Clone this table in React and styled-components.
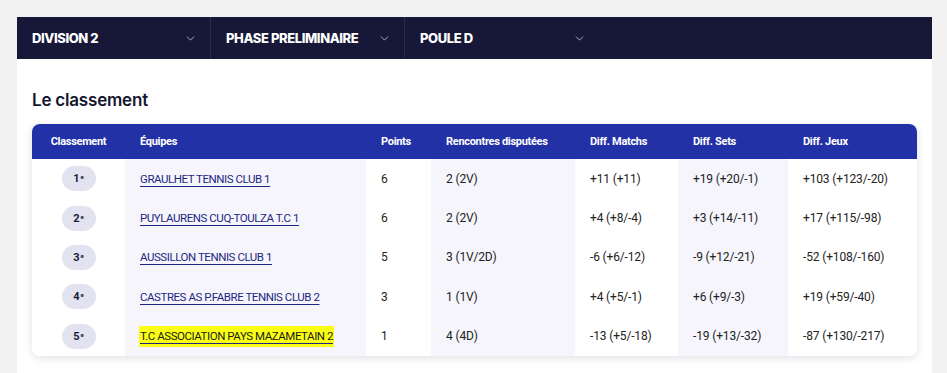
import React from 'react';
import styled, { createGlobalStyle } from 'styled-components';
import { ChevronDown } from 'lucide-react';

const GlobalStyle = createGlobalStyle`
  body {
    margin: 0;
    background: #f2f2f3;
    font-family: Roboto, "Liberation Sans", sans-serif;
  }
`;

const Page = styled.div`
  padding: 17px 15px 0 17px;
`;

const Container = styled.div`
  width: 915px;
`;

const FilterBar = styled.div`
  display: flex;
  height: 42px;
  background: #171737;
`;

const Filter = styled.div`
  width: 194px;
  display: flex;
  align-items: center;
  justify-content: space-between;
  padding: 0 13px 0 15px;
  box-sizing: border-box;
  border-right: 1px solid #2b2b4c;
  color: #fff;
  font-family: Inter, "Noto Sans", sans-serif;
  font-weight: 800;
  font-size: 13px;
  letter-spacing: -0.4px;
  text-transform: uppercase;

  svg {
    color: #c9c9d8;
  }

  &:last-child {
    border-right: none;
  }
`;

const Panel = styled.div`
  background: #fff;
  padding: 29px 15px 17px;
`;

const Title = styled.h2`
  margin: 0 0 12px;
  font-family: Inter, "Noto Sans", sans-serif;
  font-size: 17px;
  line-height: 24px;
  font-weight: 600;
  color: #16162e;
  letter-spacing: -0.2px;
`;

const TableWrap = styled.div`
  border-radius: 8px;
  overflow: hidden;
  box-shadow: 0 2px 8px rgba(20, 20, 60, 0.13);
`;

const Table = styled.table`
  width: 885px;
  border-collapse: collapse;
  table-layout: fixed;
`;

const Th = styled.th`
  height: 35px;
  background: #2231a6;
  color: #fff;
  font-size: 11px;
  font-weight: 700;
  letter-spacing: -0.3px;
  text-align: ${(p) => (p.$center ? 'center' : 'left')};
  padding: 0 0 0 ${(p) => (p.$center ? '0' : '15px')};
`;

const Td = styled.td`
  height: 39.4px;
  padding: 0 0 0 ${(p) => (p.$center ? '0' : '15px')};
  text-align: ${(p) => (p.$center ? 'center' : 'left')};
  background: ${(p) => (p.$shade ? '#f5f5fb' : '#fff')};
  font-size: 12px;
  letter-spacing: -0.15px;
  color: #222;
  white-space: nowrap;
`;

const Rank = styled.span`
  display: inline-flex;
  align-items: center;
  justify-content: center;
  width: 34px;
  height: 25px;
  border-radius: 13px;
  background: #e2e2f1;
  font-size: 11px;
  font-weight: 700;
  color: #1b1b33;

  sup {
    font-size: 6px;
    margin-left: 1px;
    position: relative;
    top: -2px;
  }
`;

const TeamLink = styled.a`
  font-size: 11.5px;
  letter-spacing: -0.45px;
  text-decoration: underline;
  text-underline-offset: 3px;
  text-decoration-thickness: 1px;
  text-decoration-color: #1d2783;
  background: ${(p) => (p.$highlight ? '#fbff13' : 'transparent')};
  padding: ${(p) => (p.$highlight ? '3px 1px 4px' : '0')};
  margin-left: ${(p) => (p.$highlight ? '-1px' : '0')};
  color: ${(p) => (p.$highlight ? '#1a1a1a' : '#1d2783')};
`;

const columns = [
  { label: 'Classement', center: true, width: 93 },
  { label: 'Équipes', width: 241, shade: true },
  { label: 'Points', width: 65 },
  { label: 'Rencontres disputées', width: 144, shade: true },
  { label: 'Diff. Matchs', width: 103 },
  { label: 'Diff. Sets', width: 110, shade: true },
  { label: 'Diff. Jeux', width: 129 },
];

const rows = [
  ['GRAULHET TENNIS CLUB 1', '6', '2 (2V)', '+11 (+11)', '+19 (+20/-1)', '+103 (+123/-20)'],
  ['PUYLAURENS CUQ-TOULZA T.C 1', '6', '2 (2V)', '+4 (+8/-4)', '+3 (+14/-11)', '+17 (+115/-98)'],
  ['AUSSILLON TENNIS CLUB 1', '5', '3 (1V/2D)', '-6 (+6/-12)', '-9 (+12/-21)', '-52 (+108/-160)'],
  ['CASTRES AS P.FABRE TENNIS CLUB 2', '3', '1 (1V)', '+4 (+5/-1)', '+6 (+9/-3)', '+19 (+59/-40)'],
  ['T.C ASSOCIATION PAYS MAZAMETAIN 2', '1', '4 (4D)', '-13 (+5/-18)', '-19 (+13/-32)', '-87 (+130/-217)'],
];

const filters = ['Division 2', 'Phase preliminaire', 'Poule D'];

export default function App() {
  return (
    <>
      <GlobalStyle />
      <Page>
        <Container>
          <FilterBar>
            {filters.map((f) => (
              <Filter key={f}>
                {f}
                <ChevronDown size={13} strokeWidth={1.5} />
              </Filter>
            ))}
          </FilterBar>
          <Panel>
            <Title>Le classement</Title>
            <TableWrap>
              <Table>
                <colgroup>
                  {columns.map((c) => (
                    <col key={c.label} style={{ width: c.width }} />
                  ))}
                </colgroup>
                <thead>
                  <tr>
                    {columns.map((c) => (
                      <Th key={c.label} $center={c.center}>
                        {c.label}
                      </Th>
                    ))}
                  </tr>
                </thead>
                <tbody>
                  {rows.map((r, i) => (
                    <tr key={r[0]}>
                      <Td $center>
                        <Rank>
                          {i + 1}
                          <sup>e</sup>
                        </Rank>
                      </Td>
                      <Td $shade>
                        <TeamLink href="#" $highlight={i === rows.length - 1}>
                          {r[0]}
                        </TeamLink>
                      </Td>
                      {r.slice(1).map((v, j) => (
                        <Td key={j} $shade={columns[j + 2].shade}>
                          {v}
                        </Td>
                      ))}
                    </tr>
                  ))}
                </tbody>
              </Table>
            </TableWrap>
          </Panel>
        </Container>
      </Page>
    </>
  );
}
